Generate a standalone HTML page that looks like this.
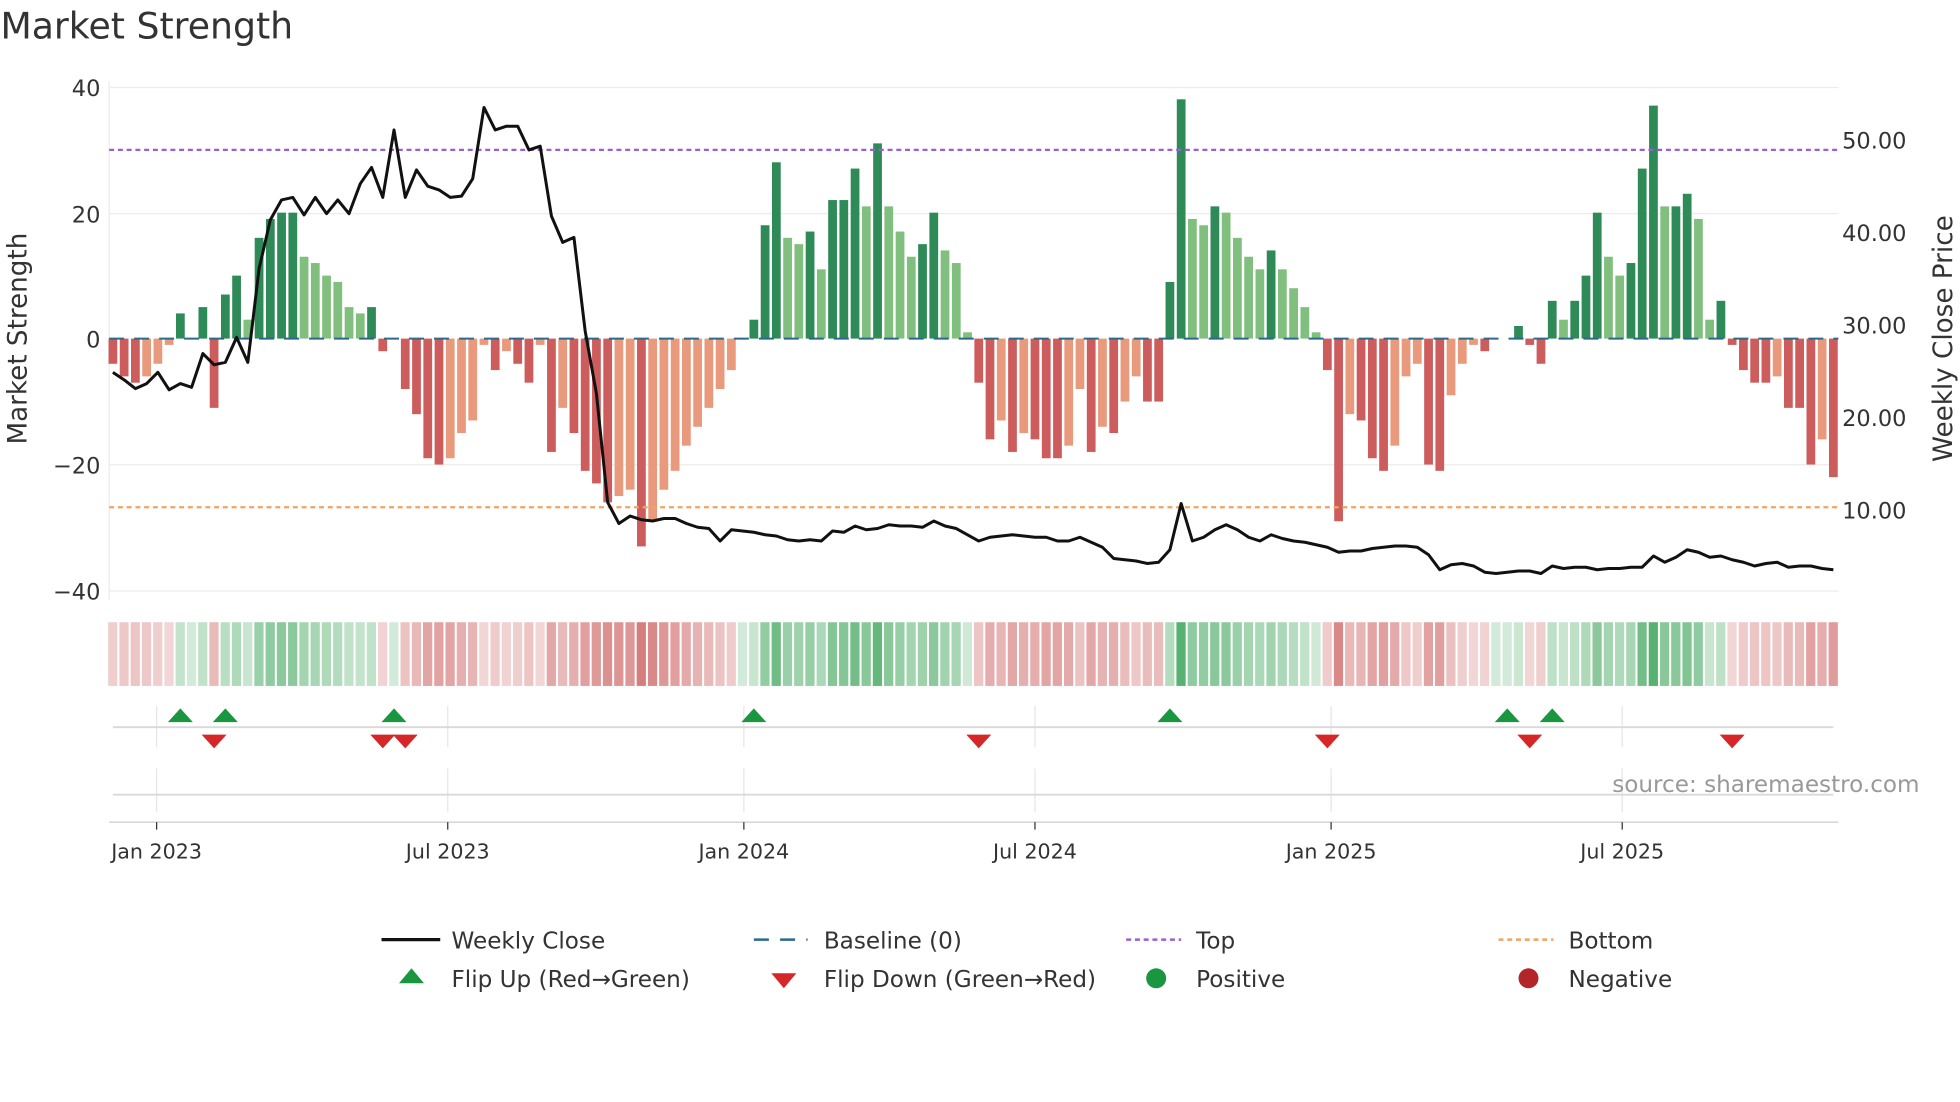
<!DOCTYPE html>
<html><head><meta charset="utf-8"><style>
html,body{margin:0;padding:0;background:#fff;width:1960px;height:1102px;overflow:hidden}
svg{display:block;font-family:"DejaVu Sans","Liberation Sans",sans-serif}
</style></head><body>
<svg id="s" width="1960" height="1102" viewBox="0 0 1568 882" xmlns="http://www.w3.org/2000/svg">
<rect width="1568" height="882" fill="#fff"/>
<text x="0" y="31" font-size="29" fill="#333">Market Strength</text>
<g stroke="#ececec" stroke-width="1">
<line x1="87" x2="1471" y1="70" y2="70"/><line x1="87" x2="1471" y1="171" y2="171"/>
<line x1="87" x2="1471" y1="372" y2="372"/><line x1="87" x2="1471" y1="473" y2="473"/>
<line x1="87" x2="87" y1="65" y2="480"/>
</g>
<g font-size="18" fill="#333" text-anchor="end">
<text x="80" y="77">40</text><text x="80" y="178">20</text><text x="80" y="278">0</text>
<text x="80" y="379">−20</text><text x="80" y="480">−40</text>
</g>
<g font-size="18" fill="#333">
<text x="1474" y="119">50.00</text><text x="1474" y="193">40.00</text><text x="1474" y="267">30.00</text>
<text x="1474" y="341">20.00</text><text x="1474" y="415">10.00</text>
</g>
<text transform="translate(21,271) rotate(-90)" font-size="21" fill="#333" text-anchor="middle">Market Strength</text>
<text transform="translate(1562,271) rotate(-90)" font-size="21" fill="#333" text-anchor="middle">Weekly Close Price</text>
<g id="bars"></g>
<line x1="87" x2="1471" y1="271" y2="271" stroke="#2b6a8a" stroke-width="1.6" stroke-dasharray="12,8"/>
<line x1="87" x2="1471" y1="120" y2="120" stroke="#9a5fd6" stroke-width="1.8" stroke-dasharray="4,3"/>
<line x1="87" x2="1471" y1="406" y2="406" stroke="#eea564" stroke-width="1.8" stroke-dasharray="4,3"/>
<polyline id="price" fill="none" stroke="#111" stroke-width="2.4" stroke-linejoin="round"/>
<g id="heat"></g>
<g stroke="#e6e6e6" stroke-width="1">
<line x1="125" x2="125" y1="565" y2="598"/><line x1="358" x2="358" y1="565" y2="598"/>
<line x1="595" x2="595" y1="565" y2="598"/><line x1="828" x2="828" y1="565" y2="598"/>
<line x1="1065" x2="1065" y1="565" y2="598"/><line x1="1298" x2="1298" y1="565" y2="598"/>
<line x1="125" x2="125" y1="615" y2="650"/><line x1="358" x2="358" y1="615" y2="650"/>
<line x1="595" x2="595" y1="615" y2="650"/><line x1="828" x2="828" y1="615" y2="650"/>
<line x1="1065" x2="1065" y1="615" y2="650"/><line x1="1298" x2="1298" y1="615" y2="650"/>
</g>
<line x1="90" x2="1467" y1="582" y2="582" stroke="#d9d9d9" stroke-width="1.5"/>
<line x1="90" x2="1467" y1="636" y2="636" stroke="#d9d9d9" stroke-width="1.5"/>
<line x1="87" x2="1471" y1="658" y2="658" stroke="#ccc" stroke-width="1"/>
<g id="marks"></g>
<text x="1536" y="634" font-size="18.5" fill="#999" text-anchor="end">source: sharemaestro.com</text>
<g stroke="#333" stroke-width="1"><line x1="125" x2="125" y1="658" y2="664"/><line x1="358" x2="358" y1="658" y2="664"/><line x1="595" x2="595" y1="658" y2="664"/><line x1="828" x2="828" y1="658" y2="664"/><line x1="1065" x2="1065" y1="658" y2="664"/><line x1="1298" x2="1298" y1="658" y2="664"/></g>
<g font-size="16.5" fill="#333" text-anchor="middle">
<text x="125" y="687">Jan 2023</text><text x="358" y="687">Jul 2023</text><text x="595" y="687">Jan 2024</text>
<text x="828" y="687">Jul 2024</text><text x="1065" y="687">Jan 2025</text><text x="1298" y="687">Jul 2025</text>
</g>
<g font-size="18.5" fill="#333">
<line x1="305" x2="352" y1="752" y2="752" stroke="#111" stroke-width="2.6"/>
<text x="361" y="759">Weekly Close</text>
<line x1="603" x2="646" y1="752" y2="752" stroke="#2b6a8a" stroke-width="2" stroke-dasharray="12,9"/>
<text x="659" y="759">Baseline (0)</text>
<line x1="901" x2="945" y1="752" y2="752" stroke="#9a5fd6" stroke-width="2" stroke-dasharray="4,3"/>
<text x="957" y="759">Top</text>
<line x1="1199" x2="1243" y1="752" y2="752" stroke="#eea564" stroke-width="2" stroke-dasharray="4,3"/>
<text x="1255" y="759">Bottom</text>
<polygon points="319,787 339,787 329,775" fill="#1a9641"/>
<text x="361" y="790">Flip Up (Red→Green)</text>
<polygon points="617,779 637,779 627,791" fill="#d62728"/>
<text x="659" y="790">Flip Down (Green→Red)</text>
<circle cx="925" cy="783" r="8" fill="#1a9641"/>
<text x="957" y="790">Positive</text>
<circle cx="1223" cy="783" r="8" fill="#b2262a"/>
<text x="1255" y="790">Negative</text>
</g>
</svg>
<script>
var V=[-4,-6,-7,-6,-4,-1,4,0,5,-11,7,10,3,16,19,20,20,13,12,10,9,5,4,5,-2,0,-8,-12,-19,-20,-19,-15,-13,-1,-5,-2,-4,-7,-1,-18,-11,-15,-21,-23,-26,-25,-24,-33,-29,-24,-21,-17,-14,-11,-8,-5,0,3,18,28,16,15,17,11,22,22,27,21,31,21,17,13,15,20,14,12,1,-7,-16,-13,-18,-15,-16,-19,-19,-17,-8,-18,-14,-15,-10,-6,-10,-10,9,38,19,18,21,20,16,13,11,14,11,8,5,1,-5,-29,-12,-13,-19,-21,-17,-6,-4,-20,-21,-9,-4,-1,-2,0,0,2,-1,-4,6,3,6,10,20,13,10,12,27,37,21,21,23,19,3,6,-1,-5,-7,-7,-6,-11,-11,-20,-16,-22];
var P=[298,304,311,307,298,312,307,310,283,292,290,270,290,215,176,160,158,172,158,171,160,171,147,134,158,104,158,136,149,152,158,157,143,86,104,101,101,120,117,173,194,190,265,315,402,419,413,416,417,415,415,419,422,423,433,424,425,426,428,429,432,433,432,433,425,426,421,424,423,420,421,421,422,417,421,423,428,433,430,429,428,429,430,430,433,433,430,434,438,447,448,449,451,450,440,403,433,430,424,420,424,430,433,428,431,433,434,436,438,442,441,441,439,438,437,437,438,444,456,452,451,453,458,459,458,457,457,459,453,455,454,454,456,455,455,454,454,445,450,446,440,442,446,445,448,450,453,451,450,454,453,453,455,456];
var NS="http://www.w3.org/2000/svg",x0=90,step=(1467-x0)/(V.length-1);
function el(p,t,a){var e=document.createElementNS(NS,t);for(var k in a)e.setAttribute(k,a[k]);p.appendChild(e);}
var B=document.getElementById('bars'),H=document.getElementById('heat'),M=document.getElementById('marks');
for(var i=0;i<V.length;i++){var v=V[i],cx=x0+i*step,pv=i?V[i-1]:0;
var inc=Math.abs(v)>=Math.abs(pv)||(v>0)!=(pv>0);
var c=v>=0?(inc?'#2e8a57':'#80bf7d'):(inc?'#cd5c5c':'#e99a7c');
if(v!=0){var h=Math.abs(v)*5.04;el(B,'rect',{x:cx-3.5,y:v>0?271-h:271,width:7,height:h,fill:c});}
var a=Math.min(1,Math.abs(v)/35);
var hc=v>=0?'rgba(50,160,80,'+(0.22+0.6*a)+')':'rgba(200,80,80,'+(0.22+0.55*a)+')';
el(H,'rect',{x:cx-3.8,y:498,width:7.4,height:51,fill:hc});}
var pts=[];for(var i=0;i<P.length;i++)pts.push((x0+i*(1467-x0)/(P.length-1)).toFixed(1)+','+P[i]);
document.getElementById('price').setAttribute('points',pts.join(' '));
[144,180,315,603,936,1206,1242].forEach(function(x){el(M,'polygon',{points:(x-10)+',578 '+(x+10)+',578 '+x+',567',fill:'#1a9641'});});
[171,306,324,783,1062,1224,1386].forEach(function(x){el(M,'polygon',{points:(x-10)+',588 '+(x+10)+',588 '+x+',599',fill:'#d62728'});});
</script>
</body></html>
